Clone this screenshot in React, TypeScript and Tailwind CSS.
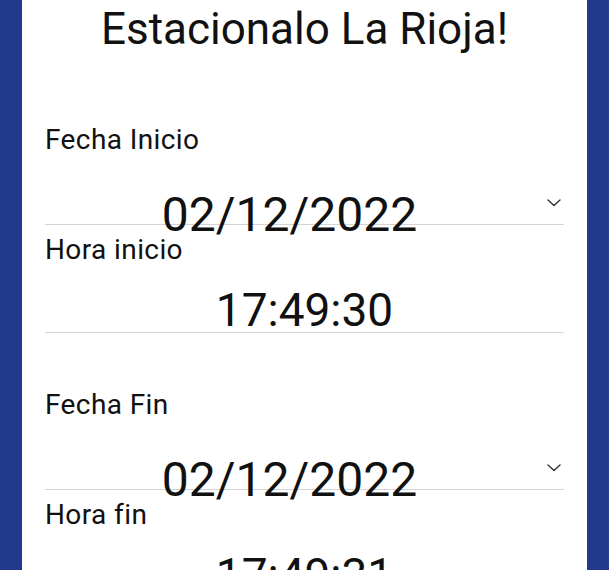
function Chevron() {
  return (
    <svg width="14" height="8" viewBox="0 0 14 8" fill="none" className="mt-[8px] ml-[13px]">
      <path d="M1 1 L7 6.5 L13 1" stroke="#333" strokeWidth="1.4" strokeLinecap="round" strokeLinejoin="round" />
    </svg>
  )
}

function DateField({ label, value }: { label: string; value: string }) {
  return (
    <>
      <div className="text-[28px] leading-[30px] tracking-[0.4px] text-[#111]">{label}</div>
      <div className="flex h-[70px] border-b border-[#d4d4d4] pt-[36px]">
        <div className="flex-1 text-center text-[48px] leading-none text-[#111]">{value}</div>
        <div className="w-[30px]">
          <Chevron />
        </div>
      </div>
    </>
  )
}

function TimeField({ label, value }: { label: string; value: string }) {
  return (
    <>
      <div className="mt-[10px] text-[28px] leading-[30px] tracking-[0.4px] text-[#111]">{label}</div>
      <div className="h-[68px] border-b border-[#d4d4d4] pt-[22px] text-center text-[46px] leading-none text-[#111]">
        {value}
      </div>
    </>
  )
}

export default function App() {
  return (
    <div className="h-[570px] overflow-hidden bg-[#23398b] px-[22px] font-['Roboto',sans-serif]">
      <div className="h-full bg-white px-[23px]">
        <h1 className="pt-[7px] text-center text-[44px] leading-none font-normal text-[#111]">
          Estacionalo La Rioja!
        </h1>
        <div className="mt-[74px]">
          <DateField label="Fecha Inicio" value="02/12/2022" />
          <TimeField label="Hora inicio" value="17:49:30" />
        </div>
        <div className="mt-[57px]">
          <DateField label="Fecha Fin" value="02/12/2022" />
          <TimeField label="Hora fin" value="17:49:31" />
        </div>
      </div>
    </div>
  )
}
